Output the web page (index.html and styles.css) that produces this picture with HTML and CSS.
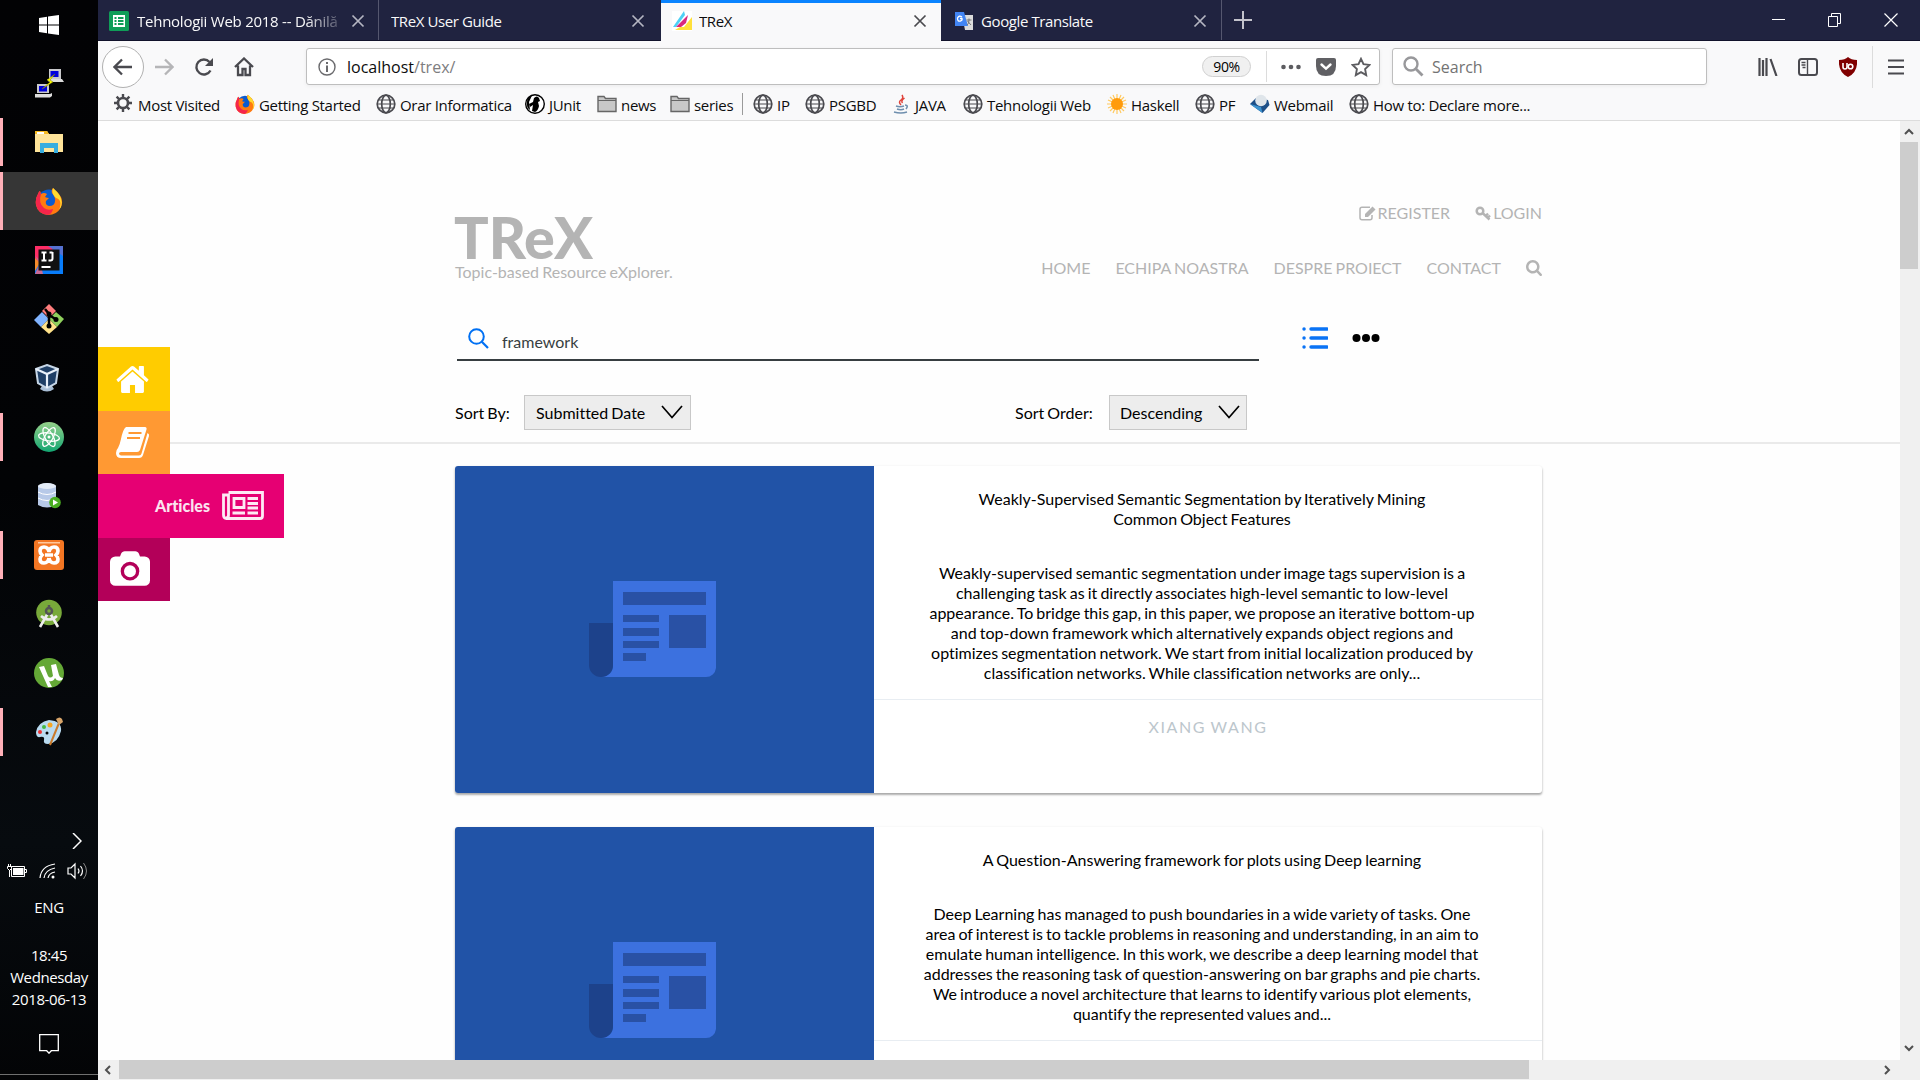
FILE: index.html
```html
<!DOCTYPE html>
<html lang="en">
<head>
<meta charset="utf-8">
<title>TReX</title>
<link rel="stylesheet" href="styles.css">
</head>
<body>
<svg class="defs" aria-hidden="true">
  <symbol id="globe" viewBox="0 0 20 20"><g fill="none" stroke="#4a4a4f" stroke-width="1.7"><circle cx="10" cy="10" r="8.8"/><ellipse cx="10" cy="10" rx="4.3" ry="8.8"/><path d="M2.5 6h15M2.5 14h15M1.2 10h17.6" stroke-width="1.2"/></g></symbol>
  <symbol id="folder" viewBox="0 0 20 20"><path d="M1 2.500h6l1.500 2H19v13H1z" fill="#c8c8c8" stroke="#666" stroke-width="1.4"/><path d="M1 6.500h18" stroke="#666"/></symbol>
  <symbol id="fox" viewBox="0 0 28 28"><circle cx="14" cy="14.500" r="12" fill="#0a5bd0"/><path d="M3 7Q4 4 5 4L6 7Q9 5 12 7L10 10Q12 11 14 11L11 14Q10 18 14 19Q20 19 20 14Q21 10 17 6Q16 3 18 1Q22 5 24 7Q29 13 26 20Q22 28 13 28Q3 27 1 18Q0 12 3 7z" fill="#ff7a10"/><path d="M18 1Q23 5 25 9Q29 17 24 23Q28 13 21 11Q16 7 18 1z" fill="#ffdb30"/><path d="M3 7Q4 4 5 4L6 7Q3 16 9 21Q13 24 18 22Q17 27 13 28Q3 27 1 18Q0 12 3 7z" fill="#f5254b"/></symbol>
  <symbol id="close" viewBox="0 0 14 14"><path d="M1.500 1.500l11 11M12.500 1.500l-11 11" stroke="currentColor" stroke-width="1.7"/></symbol>
  <symbol id="paper" viewBox="0 0 128 97"><path d="M24 0h103v87a10 10 0 0 1-10 9H12q12-1 12-12z" fill="#3c71df"/><path d="M34 11h83v13H34zM34 34h36v7H34zM34 47h36v8H34zM34 60h36v7H34zM34 72h23v8H34zM80 34h37v33H80z" fill="#2951a5"/><path d="M0 42h24v42a12 12 0 0 1-24 0z" fill="#1d428b"/></symbol>
  <symbol id="glass" viewBox="64 128 1664 1664"><path fill="currentColor" d="M1216 832q0-185-131.500-316.500t-316.500-131.500-316.500 131.500-131.500 316.500 131.500 316.500 316.500 131.500 316.500-131.500 131.500-316.500zm512 832q0 52-38 90t-90 38q-54 0-90-38l-343-342q-179 124-399 124-143 0-273.500-55.500t-225-150-150-225-55.500-273.500 55.500-273.500 150-225 225-150 273.500-55.500 273.500 55.500 225 150 150 225 55.500 273.500q0 220-124 399l343 343q37 37 37 90z"/></symbol>
  <symbol id="down" viewBox="0 0 22 14"><path d="M1 1l10 11.500L21 1" fill="none" stroke="#000" stroke-width="1.700"/></symbol>
</svg>

<div class="desktop">
  <aside class="taskbar">
    <div class="task start"><svg width="20" height="20" viewBox="0 0 20 20"><path d="M0 3l8-1.200v7.700H0zM9 1.600L20 0v9.500H9zM0 10.500h8v7.700L0 17zM9 10.500h11V20L9 18.400z" fill="#fff"/></svg></div>
    <div class="task"><svg width="30" height="30" viewBox="0 0 30 30"><path d="M15 1h12v10H15zM3 16h12v9H3z" fill="#c9c9cc"/><path d="M16.500 3h8v6h-8zM5 18h8v5.500H5z" fill="#00d"/><path d="M13 11h15l2 3H15zM1 26h15l2-1v3l-2 1.500H1z" fill="#ddd"/><path d="M21 6l-8 6 3 2-8 7 11-7-3-2z" fill="#ff0" stroke="#770" stroke-width=".5"/></svg></div>
    <div class="task open"><svg width="28" height="24" viewBox="0 0 28 24"><path d="M0 1h12l2 3h14v18H0z" fill="#ffe49a"/><path d="M0 1h12l2 3H0z" fill="#f5b921"/><path d="M2 2h7v2H2z" fill="#fff"/><path d="M5 13h18v10h-4v-5H9v5H5z" fill="#37ade0"/></svg></div>
    <div class="task open active"><svg width="28" height="28"><use href="#fox"/></svg></div>
    <div class="task"><svg width="28" height="28" viewBox="0 0 28 28"><path d="M0 0h28v28H0z" fill="#087cfa"/><path d="M0 0h22L0 20z" fill="#fe2d66"/><path d="M0 10l6 5-6 13h8l-2-8z" fill="#c86a95"/><path d="M0 12l5 5-5 8z" fill="#f58b2c"/><path d="M13 0h15v10z" fill="#5671d0"/><path d="M3.500 3.500h21v21h-21z" fill="#111"/><path d="M6.500 6.500h5M9 6.500v8M6.500 14.500h5M17.500 6v6.500q0 2-2 2h-2M14.500 6.500h3M6.500 21h9" fill="none" stroke="#fff" stroke-width="2"/></svg></div>
    <div class="task"><svg width="30" height="30" viewBox="0 0 30 30"><path d="M15 0l7 7-7 7-7-7z" fill="#ff7d7d"/><path d="M8 8l7 7-8 8-7-7z" fill="#80b3ff"/><path d="M22 8l8 7-7 8-8-8z" fill="#8fd05d"/><path d="M15 15l8 8-8 7-8-7z" fill="#ffe28a"/><path d="M11 5l4 5v13M15 11l8 5" fill="none" stroke="#000" stroke-width="2.500"/><circle cx="15" cy="10" r="2.500"/><circle cx="15" cy="22" r="2.500"/><circle cx="22" cy="15.500" r="2.500"/></svg></div>
    <div class="task vbox"><svg width="26" height="28" viewBox="0 0 26 28"><path d="M8 22h10l2 3q-7 5-14 0z" fill="#a8bed6"/><path d="M13 1l11 4-2 14-9 5-9-5L2 5z" fill="#1f3f66" stroke="#c5d5e6" stroke-width="2"/><path d="M2 5l11 5 11-5M13 10v14" fill="none" stroke="#e8f0fa" stroke-width="2.200"/></svg></div>
    <div class="task open"><svg width="30" height="30" viewBox="0 0 30 30"><defs><linearGradient id="atom" x2="0" y2="1"><stop stop-color="#96d18a"/><stop offset="1" stop-color="#12a672"/></linearGradient></defs><circle cx="15" cy="15" r="15" fill="url(#atom)"/><g fill="none" stroke="#fff" stroke-width="1.300"><ellipse cx="15" cy="15" rx="10.500" ry="4" transform="rotate(8 15 15)"/><ellipse cx="15" cy="15" rx="10.500" ry="4" transform="rotate(62 15 15)"/><ellipse cx="15" cy="15" rx="10.500" ry="4" transform="rotate(120 15 15)"/></g><circle cx="15" cy="15" r="1.500" fill="#fff"/></svg></div>
    <div class="task"><svg width="24" height="27" viewBox="0 0 24 27"><path d="M1 4q9-6 18 0v19q-9 5-18 0z" fill="#b7c9e8"/><ellipse cx="10" cy="4" rx="9" ry="3" fill="#e4ecf8"/><path d="M1 10q9 5 18 0M1 16q9 5 18 0" fill="none" stroke="#fff"/><circle cx="18" cy="20.500" r="5.800" fill="#4aae22"/><path d="M16 17.500l5 3-5 3z" fill="#fff"/></svg></div>
    <div class="task open"><svg width="30" height="30" viewBox="0 0 30 30"><rect width="30" height="30" rx="3" fill="#f37623"/><path d="M4 2h22v1.500H4z" fill="#ffc79c"/><path d="M15 12q-1-5-5-5-4 0-4 4 0 2 2 4-2 2-2 4 0 4 4 4 4 0 5-5M15 12q1-5 5-5 4 0 4 4 0 2-2 4 2 2 2 4 0 4-4 4-4 0-5-5M11 15h8" fill="none" stroke="#fff" stroke-width="3.600"/></svg></div>
    <div class="task"><svg width="26" height="30" viewBox="0 0 26 30"><circle cx="13" cy="13.500" r="12.800" fill="#78a93a"/><path d="M12 14L4 28M14 14l8 14M5 17q8 7 16 0" fill="none" stroke="#eee" stroke-width="2.600"/><circle cx="13" cy="12" r="3" fill="none" stroke="#555" stroke-width="2.500"/><path d="M13 6v4" stroke="#555" stroke-width="2.500"/></svg></div>
    <div class="task"><svg width="30" height="30" viewBox="0 0 30 30"><circle cx="15" cy="15" r="15" fill="#64a836"/><path d="M5 9l5-1 4 10q2 3 5 0l-2-11 5-1 3 11q1 3 4 3l-1 2q-5 2-7-2-2 4-6 3l3 6h-4z" fill="#fff"/></svg></div>
    <div class="task open"><svg width="30" height="30" viewBox="0 0 30 30"><path d="M2 15Q4 5 15 3q13 1 12 11-3 12-13 13-5 0-4-4 1-4-4-3-4 1-4-5z" fill="#b9dbf0"/><circle cx="6" cy="15" r="2" fill="#e33"/><circle cx="10" cy="10" r="2" fill="#4b4"/><circle cx="16" cy="8" r="2.500" fill="#f6a623"/><circle cx="13" cy="16" r="1.500"/><path d="M16 28L25 6" stroke="#c97a2b" stroke-width="2"/><path d="M22 2q4-3 6 0l1 3-4 3z" fill="#d8a56a"/></svg></div>
    <div class="tray-more"><svg width="10" height="16" viewBox="0 0 10 16"><path d="M1 0l8 8-8 8" fill="none" stroke="#fff" stroke-width="1.500"/></svg></div>
    <div class="tray">
      <svg width="20" height="14" viewBox="0 0 20 14"><path d="M4.500 2.500h13v10h-13zM18 5.500h1.500v3H18" fill="none" stroke="#fff"/><path d="M6 4h10.500v7H6z" fill="#fff"/><path d="M1.500 0v2M3.500 0v2M.5 2.500h4v2l-2 2-2-2zM2.500 6v7" stroke="#fff" fill="#000"/></svg>
      <svg width="17" height="16" viewBox="0 0 17 16"><g fill="none" stroke="#fff" stroke-width="1.200"><path d="M1 15Q2 3 16 1M5 15Q6 7 16 5M9 15Q10 10 16 9"/></g><circle cx="14" cy="14" r="1.500" fill="#fff"/></svg>
      <svg width="21" height="18" viewBox="0 0 21 18"><path d="M1 6h3l4-4v14l-4-4H1zM11 6.500q2 2.500 0 5M13.500 4q4 5 0 10" fill="none" stroke="#fff" stroke-width="1.200"/><path d="M16.500 1q6 8 0 16" fill="none" stroke="#888"/></svg>
    </div>
    <div class="lang">ENG</div>
    <div class="clock"><span>18:45</span><span>Wednesday</span><span>2018-06-13</span></div>
    <div class="action"><svg width="20" height="20" viewBox="0 0 20 20"><path d="M.7.7h18.600v16h-7l-2.300 2.500-2.300-2.500h-7z" fill="none" stroke="#fff" stroke-width="1.300"/></svg></div>
    <div class="show-desktop"></div>
  </aside>

  <main class="browser">
    <header class="tabs">
      <div class="tab first"><svg width="20" height="20" viewBox="0 0 20 20"><rect width="20" height="20" rx="1.500" fill="#0f9d58"/><path d="M4 4h12v12H4z" fill="#fff"/><path d="M5.500 6h2v2h-2zM9 6h5.500v2H9zM5.500 9h2v2h-2zM9 9h5.500v2H9zM5.500 12h2v2h-2zM9 12h5.500v2H9z" fill="#0f9d58"/></svg><span class="tab-title faded">Tehnologii Web 2018 -- Dănilă</span><svg class="x" width="14" height="14"><use href="#close"/></svg></div>
      <div class="tab plain"><span class="tab-title">TReX User Guide</span><svg class="x" width="14" height="14"><use href="#close"/></svg></div>
      <div class="tab current"><svg width="20" height="20" viewBox="0 0 20 20"><path d="M0 0h20v20H0z" fill="#fff"/><path d="M12 0l1 4L4 16H1z" fill="#4dd0f5"/><path d="M16 4l-2 8-5 4H4z" fill="#d9277e"/><path d="M20 6v13H3l5-3h4z" fill="#ffe03a"/></svg><span class="tab-title">TReX</span><svg class="x" width="14" height="14"><use href="#close"/></svg></div>
      <div class="tab last"><svg width="20" height="20" viewBox="0 0 20 20"><path d="M8 4h11v15H11z" fill="#dcdcdc"/><path d="M1 1h9l4 14H1z" fill="#4285f4"/><path d="M8 6q-3-2-4.500 1 0 4 3 3 2-.5 1.500-2.500H6" fill="none" stroke="#fff" stroke-width="1.300"/><path d="M12.500 9h5M15 7.500V9q0 4-2 5M13.500 10l3.500 4" stroke="#777" fill="none"/></svg><span class="tab-title">Google Translate</span><svg class="x" width="14" height="14"><use href="#close"/></svg></div>
      <svg class="plus" width="18" height="18" viewBox="0 0 18 18"><path d="M9 0v18M0 9h18" stroke="#c3c3cc" stroke-width="2"/></svg>
      <div class="win">
        <svg width="13" height="16" viewBox="0 0 13 16"><path d="M0 7.500h13" stroke="#fff"/></svg>
        <svg width="13" height="14" viewBox="0 0 13 14"><path d="M.5 3.500h9v10h-9zM3.500 3V.5h9v10H10" fill="none" stroke="#fff"/></svg>
        <svg width="14" height="14" viewBox="0 0 14 14"><path d="M.5.5l13 13M13.500.5l-13 13" stroke="#fff" stroke-width="1.200"/></svg>
      </div>
    </header>

    <nav class="toolbar">
      <span class="back"><svg width="20" height="18" viewBox="0 0 20 18"><path d="M19 9H2M9 1.500L1.500 9 9 16.500" fill="none" stroke="#4a4a4f" stroke-width="2.300"/></svg></span>
      <svg class="fwd" width="20" height="18" viewBox="0 0 20 18"><path d="M1 9h17M11 1.500L18.500 9 11 16.500" fill="none" stroke="#b5b5b7" stroke-width="2.300"/></svg>
      <svg class="reload" width="20" height="20" viewBox="0 0 20 20"><path d="M16.500 13.500A7.500 7.500 0 1 1 15.500 5" fill="none" stroke="#4a4a4f" stroke-width="2.400"/><path d="M19 1v8h-8z" fill="#4a4a4f"/></svg>
      <svg class="home" width="20" height="20" viewBox="0 0 20 20"><path d="M1 10l9-8.500L19 10M4 8.500V18h4.500v-6h3v6H16V8.500" fill="none" stroke="#4a4a4f" stroke-width="2.300"/></svg>
      <div class="urlbar">
        <svg width="18" height="18" viewBox="0 0 18 18"><circle cx="9" cy="9" r="8" fill="none" stroke="#6a6a6d" stroke-width="1.400"/><path d="M9 4v2M9 7.500V14" stroke="#6a6a6d" stroke-width="2"/></svg>
        <span class="url">localhost<i>/trex/</i></span>
        <span class="zoom">90%</span>
        <span class="sep"></span>
        <svg class="dots" width="20" height="6" viewBox="0 0 20 6"><g fill="#5c5c60"><circle cx="2.500" cy="3" r="2.300"/><circle cx="10" cy="3" r="2.300"/><circle cx="17.500" cy="3" r="2.300"/></g></svg>
        <svg class="pocket" width="20" height="18" viewBox="0 0 20 18"><path d="M2 0h16q2 0 2 2v6q0 10-10 10T0 8V2q0-2 2-2z" fill="#606064"/><path d="M5.500 6.500l4.500 4.200 4.500-4.200" fill="none" stroke="#fff" stroke-width="2.400" stroke-linecap="round"/></svg>
        <svg class="star" width="20" height="20" viewBox="0 0 20 20"><path d="M10 1.800l2.500 5.400 5.900.7-4.300 4.200 1.100 6L10 15.200l-5.200 2.900 1.100-6L1.600 7.900l5.900-.7z" fill="none" stroke="#5c5c60" stroke-width="1.900"/></svg>
      </div>
      <div class="searchbar"><svg width="21" height="21" viewBox="0 0 21 21"><circle cx="8" cy="8" r="6.500" fill="none" stroke="#98989b" stroke-width="2.400"/><path d="M12.500 12.500l7 7" stroke="#98989b" stroke-width="2.800"/></svg><span>Search</span></div>
      <svg class="library" width="20" height="18" viewBox="0 0 20 18"><path d="M1.500 0v18M5 2v16M8.500 0v18M12.500 1l6 17" stroke="#4a4a4f" stroke-width="2.200"/></svg>
      <svg class="sidebar-icon" width="20" height="18" viewBox="0 0 20 18"><rect x="1" y="1" width="18" height="16" rx="2.500" fill="none" stroke="#4a4a4f" stroke-width="2"/><path d="M9.500 1v16M3.500 4.500h4M3.500 7h4M4.500 9.500h3" stroke="#4a4a4f" stroke-width="1.400"/></svg>
      <svg class="ublock" width="18" height="20" viewBox="0 0 18 20"><path d="M9 0q3 3 9 3 1 12-9 17Q-1 15 0 3q6 0 9-3z" fill="#800000"/><path d="M4 6v4q0 2 2 2t2-2V6" fill="none" stroke="#fff" stroke-width="1.600"/><circle cx="11.500" cy="9.500" r="2.300" fill="none" stroke="#fff" stroke-width="1.600"/></svg>
      <span class="sep tall"></span>
      <svg class="menu" width="16" height="16" viewBox="0 0 16 16"><path d="M0 1.500h16M0 8h16M0 14.500h16" stroke="#4a4a4f" stroke-width="2.200"/></svg>
    </nav>

    <div class="bookmarks">
      <span><svg viewBox="0 0 20 20"><circle cx="9" cy="9" r="5" fill="none" stroke="#4a4a4f" stroke-width="2.600"/><path d="M9 0v4M9 14v4M0 9h4M14 9h4M2.600 2.600l3 3M12.400 12.400l3 3M2.600 15.400l3-3M12.400 5.600l3-3" stroke="#4a4a4f" stroke-width="2.400"/></svg>Most Visited</span>
      <span><svg><use href="#fox"/></svg>Getting Started</span>
      <span><svg><use href="#globe"/></svg>Orar Informatica</span>
      <span><svg viewBox="0 0 20 20"><circle cx="10" cy="10" r="9.300" fill="#fff" stroke="#000" stroke-width="1.400"/><path d="M9 4q3-3 5 0l1 3-2 1 1 4q-1 5-4 6l-3-1 1-6-3 2-1-3 4-2z"/><path d="M2 8q0-5 5-6.500L4 8l1 8q-4-3-3-8z"/></svg>JUnit</span>
      <span><svg><use href="#folder"/></svg>news</span>
      <span><svg><use href="#folder"/></svg>series</span>
      <b class="divider"></b>
      <span><svg><use href="#globe"/></svg>IP</span>
      <span><svg><use href="#globe"/></svg>PSGBD</span>
      <span><svg viewBox="0 0 20 20"><path d="M11 1q2 3-1 5t0 5M13.500 4q-4 3-2 5" fill="none" stroke="#e0433a" stroke-width="1.500"/><path d="M5 12q4 1.500 8 0M6 15q4 1.500 7 0M3 18q7 2 13 0M14 11q4 0 1 4" fill="none" stroke="#6f8fae" stroke-width="1.500"/></svg>JAVA</span>
      <span><svg><use href="#globe"/></svg>Tehnologii Web</span>
      <span><svg viewBox="0 0 20 20"><path d="M10 0v20M0 10h20M3 3l14 14M17 3L3 17M6 1l8 18M14 1L6 19M1 6l18 8M1 14l18-8" stroke="#ffc95e" stroke-width="1.200"/><circle cx="10" cy="10" r="6" fill="#ff9b0b"/></svg>Haskell</span>
      <span><svg><use href="#globe"/></svg>PF</span>
      <span><svg viewBox="0 0 20 20"><path d="M0 10l6-6 12 2 1.500 5-7 8z" fill="#1c4f88"/><path d="M0 10l11 3 1.500 6z" fill="#3c93d0"/><circle cx="11" cy="6.500" r="5.800" fill="#dfe5ea"/></svg>Webmail</span>
      <span><svg><use href="#globe"/></svg>How to: Declare more...</span>
    </div>

    <div class="viewport">
      <section class="page">
        <div class="container">
          <div class="head">
            <div class="brand"><h1>TReX</h1><p>Topic-based Resource eXplorer.</p></div>
            <div class="menus">
              <div class="account">
                <a><svg width="17" height="15" viewBox="0 0 17 15"><path d="M11 1.200H3Q1 1.200 1 3.200v8.600q0 2 2 2h8q2 0 2-2V9" fill="none" stroke="currentColor" stroke-width="1.500"/><path d="M6 8l7.500-7.500 3 3L9 11H6z" fill="currentColor"/></svg> REGISTER</a>
                <a><svg width="16" height="15" viewBox="0 0 16 15"><circle cx="5" cy="5" r="3.300" fill="none" stroke="currentColor" stroke-width="2.500"/><path d="M7.500 7l7 6.500M10.500 10.500l2.500-3M12.500 12l2.500-2.500" stroke="currentColor" stroke-width="2.400"/></svg>LOGIN</a>
              </div>
              <div class="links"><a>HOME</a><a>ECHIPA NOASTRA</a><a>DESPRE PROIECT</a><a>CONTACT</a><svg width="16" height="16"><use href="#glass"/></svg></div>
            </div>
          </div>
          <div class="find">
            <div class="field"><svg width="21" height="21" viewBox="0 0 21 21"><circle cx="8.500" cy="8.500" r="7.300" fill="none" stroke="#0070f3" stroke-width="2"/><path d="M13.800 13.800l6.200 6.200" stroke="#0070f3" stroke-width="2.200"/></svg><span>framework</span></div>
            <svg class="list" width="26" height="24" viewBox="0 0 26 24"><path d="M9 3h16M9 12h16M9 21h16M2 3h.1M2 12h.1M2 21h.1" stroke="#0a73f5" stroke-width="3.400" stroke-linecap="round"/></svg>
            <svg class="more" width="28" height="8" viewBox="0 0 28 8"><circle cx="4.500" cy="4" r="4"/><circle cx="14" cy="4" r="4"/><circle cx="23.500" cy="4" r="4"/></svg>
          </div>
          <div class="sort">
            <label>Sort By:</label><div class="select by">Submitted Date<svg width="22" height="14"><use href="#down"/></svg></div>
            <label class="order-label">Sort Order:</label><div class="select order">Descending<svg width="22" height="14"><use href="#down"/></svg></div>
          </div>
        </div>
        <hr>
        <div class="results">
          <article class="card">
            <div class="thumb"><svg width="128" height="97"><use href="#paper"/></svg></div>
            <div class="info">
              <h2>Weakly-Supervised Semantic Segmentation by Iteratively Mining<br>Common Object Features</h2>
              <p>Weakly-supervised semantic segmentation under image tags supervision is a<br>challenging task as it directly associates high-level semantic to low-level<br>appearance. To bridge this gap, in this paper, we propose an iterative bottom-up<br>and top-down framework which alternatively expands object regions and<br>optimizes segmentation network. We start from initial localization produced by<br>classification networks. While classification networks are only...</p>
              <div class="author">XIANG WANG</div>
            </div>
          </article>
          <article class="card">
            <div class="thumb"><svg width="128" height="97"><use href="#paper"/></svg></div>
            <div class="info">
              <h2>A Question-Answering framework for plots using Deep learning</h2>
              <p>Deep Learning has managed to push boundaries in a wide variety of tasks. One<br>area of interest is to tackle problems in reasoning and understanding, in an aim to<br>emulate human intelligence. In this work, we describe a deep learning model that<br>addresses the reasoning task of question-answering on bar graphs and pie charts.<br>We introduce a novel architecture that learns to identify various plot elements,<br>quantify the represented values and...</p>
              <div class="author"></div>
            </div>
          </article>
        </div>
        <div class="sidetabs">
          <a class="s-home"><svg width="33" height="27" viewBox="64 253 1664 1283" preserveAspectRatio="none"><path fill="#fff" d="M1472 992v480q0 26-19 45t-45 19h-384v-384h-256v384h-384q-26 0-45-19t-19-45v-480q0-1 .5-3t.5-3l575-474 575 474q1 2 1 6zm223-69l-62 74q-8 9-21 11h-3q-13 0-21-7l-692-577-692 577q-12 8-24 7-13-2-21-11l-62-74q-8-10-7-23.500t11-21.500l719-599q32-26 76-26t76 26l244 204v-195q0-14 9-23t23-9h192q14 0 23 9t9 23v408l219 182q10 8 11 21.500t-7 23.500z"/></svg></a>
          <a class="s-book"><svg width="34" height="32" viewBox="0 0 34 32"><path d="M10 1h19q2 0 1.500 2.500L24 24q-.8 2-3 2H5q-2 0-2 1.500T5 29.500h18q2 0 2.500-2L31.500 7q2 1 1.500 3l-6 19q-1 3-4 3H5q-5 0-5-5 0-3 2-5 2-4 3-9Q7 3 10 1z" fill="#fff"/><path d="M12.500 7h13M11 12h13" stroke="#ff9933" stroke-width="2.200"/></svg></a>
          <a class="s-articles"><span>Articles</span><svg width="42" height="29" viewBox="0 0 42 29"><path d="M6.500 1.500h34V25q0 2.500-2.500 2.500H4.500Q1.500 27.500 1.500 24V4h5v20q0 3-2.500 3" fill="none" stroke="#fdeaf4" stroke-width="2.800"/><path d="M12 7.500h10v9H12zM25.500 7.500H36M25.500 12.500H36M25.500 17H36M10.500 22H23M25.500 22H36" fill="none" stroke="#fdeaf4" stroke-width="2.800"/></svg></a>
          <a class="s-camera"><svg width="40" height="35" viewBox="-64 0 1920 1664"><path fill="#fff" d="M896 672q119 0 203.500 84.500t84.500 203.500-84.500 203.500-203.500 84.500-203.500-84.500-84.500-203.500 84.500-203.500 203.500-84.500zm704-416q106 0 181 75t75 181v896q0 106-75 181t-181 75h-1408q-106 0-181-75t-75-181v-896q0-106 75-181t181-75h224l51-136q19-49 69.500-84.500t103.500-35.500h512q53 0 103.500 35.500t69.500 84.500l51 136h224zm-704 1152q185 0 316.500-131.500t131.500-316.500-131.500-316.500-316.500-131.500-316.500 131.500-131.500 316.500 131.500 316.500 316.500 131.500z"/></svg></a>
        </div>
      </section>
      <div class="vscroll"><svg width="10" height="7" viewBox="0 0 10 7"><path d="M1 6l4-4 4 4" fill="none" stroke="#505050" stroke-width="2"/></svg><i></i><svg class="end" width="10" height="7" viewBox="0 0 10 7"><path d="M1 1l4 4 4-4" fill="none" stroke="#505050" stroke-width="2"/></svg></div>
      <div class="hscroll"><svg width="7" height="10" viewBox="0 0 7 10"><path d="M6 1L2 5l4 4" fill="none" stroke="#505050" stroke-width="2"/></svg><i></i><svg class="end" width="7" height="10" viewBox="0 0 7 10"><path d="M1 1l4 4-4 4" fill="none" stroke="#505050" stroke-width="2"/></svg></div>
    </div>
  </main>
</div>
</body>
</html>
```
FILE: styles.css
```css
* { box-sizing: border-box; }
body { margin: 0; overflow: hidden; font-family: "Open Sans", "Noto Sans", sans-serif; }
svg { display: block; flex: none; }
.defs { position: absolute; width: 0; height: 0; }
.desktop { display: grid; grid-template-columns: 98px 1fr; width: 1920px; height: 1080px; overflow: hidden; }

/* Windows taskbar */
.taskbar { display: flex; flex-direction: column; background: linear-gradient(#020204, #020305 45%, #070b0f 78%, #030406); color: #fff; font-size: 15px; letter-spacing: -0.4px; text-align: center; }
.task { height: 59px; flex: none; display: grid; place-items: center; position: relative; padding-bottom: 2px; }
.start { height: 54px; padding-bottom: 4px; }
.open::before { content: ""; position: absolute; left: 0; top: 5px; width: 3px; height: 48px; background: #ffb0b8; }
.active { background: #363636; height: 58px; margin-bottom: 1px; padding-bottom: 1px; }
.active::before { top: 0; height: 58px; }
.vbox { padding-right: 4px; }
.tray-more { margin: 71px 16px 0 auto; }
.tray { display: flex; justify-content: space-between; align-items: center; padding: 0 10px 0 7px; margin-top: 13px; height: 18px; }
.lang { margin-top: 15px; line-height: 24px; }
.clock { display: flex; flex-direction: column; line-height: 22px; margin-top: 25px; }
.action { display: grid; place-items: center; margin-top: 24px; }
.show-desktop { height: 6px; margin-top: auto; border-top: 1px solid #707070; }

/* Tab strip */
.browser { display: grid; grid-template-rows: 41px 51px 29px 1fr; min-width: 0; background: #f9f9fa; }
.tabs { display: flex; background: #202340; color: #f9f9fa; border-bottom: 1px solid #11122b; font-size: 15px; letter-spacing: -0.4px; }
.tab { display: flex; align-items: center; width: 281px; padding: 2px 14px 0 13px; white-space: nowrap; }
.tab-title { margin-left: 8px; flex: 1; overflow: hidden; line-height: 24px; }
.x { color: #b5b6c2; }
.first { padding: 2px 13px 0 11px; border-right: 1px solid #55576f; }
.first .tab-title { letter-spacing: -0.25px; }
.first .x { margin-left: 9px; }
.faded { mask-image: linear-gradient(to right, #000 82%, transparent 103%); }
.plain { width: 282px; padding-left: 4px; padding-right: 16px; }
.current { width: 280px; background: #f9f9fa; color: #0c0c0d; border-top: 3px solid #0a84ff; padding: 0 14px 3px 11px; height: 41px; }
.current .tab-title { margin-left: 7px; }
.current .x { color: #4a4a4f; }
.last { border-right: 1px solid #55576f; padding-right: 14px; }
.last .tab-title { margin-left: 7px; }
.plus { margin: 11px 0 0 12px; }
.win { display: flex; align-items: center; gap: 43px; margin: 0 23px 0 auto; }

/* Navigation toolbar */
.toolbar { display: flex; align-items: center; padding: 0 17px 0 4px; }
.back { width: 42px; height: 42px; border: 1px solid #b1b1b1; border-radius: 50%; background: #fff; display: grid; place-items: center; }
.fwd { margin-left: 10px; }
.reload, .home { margin-left: 20px; }
.urlbar { display: flex; align-items: center; width: 1074px; height: 37px; margin-left: 52px; padding: 0 8px 0 11px; background: #fff; border: 1px solid #bebebe; border-radius: 3px; box-shadow: 0 1px 4px rgba(0, 0, 0, .06); }
.url { margin-left: 11px; flex: 1; font-size: 16px; letter-spacing: 0; color: #0c0c0d; }
.url i { font-style: normal; color: #7d7d80; }
.zoom { width: 49px; height: 21px; line-height: 19px; border: 1px solid #d0d0d0; border-radius: 11px; background: #f0f0f0; text-align: center; font-size: 14px; letter-spacing: -0.4px; }
.sep { width: 1px; height: 31px; margin: 0 14px 0 15px; background: #dcdcdc; }
.pocket { margin-left: 15px; }
.star { margin-left: 15px; }
.searchbar { display: flex; align-items: center; width: 315px; height: 37px; margin-left: 12px; padding-left: 10px; background: #fff; border: 1px solid #bebebe; border-radius: 3px; font-size: 16px; color: #737373; box-shadow: 0 1px 4px rgba(0, 0, 0, .06); }
.searchbar span { margin-left: 8px; }
.library { margin-left: 51px; }
.sidebar-icon { margin-left: 20px; }
.ublock { margin-left: 21px; }
.tall { height: 42px; margin: 0 15px; }

/* Bookmarks toolbar */
.bookmarks { display: grid; grid-template-columns: 121px 141px 149px 72px 73px 72px 11px 52px 86px 72px 144px 88px 55px 99px 200px; padding-left: 16px; border-bottom: 1px solid #dcdcdc; font-size: 15px; letter-spacing: -0.300px; white-space: nowrap; color: #0c0c0d; }
.bookmarks span { display: flex; align-items: center; gap: 4px; height: 26px; }
.bookmarks svg { width: 20px; height: 20px; margin-bottom: 2px; }
.divider { width: 1px; height: 22px; background: #9a9a9a; margin-top: 1px; }

/* Scrolling area */
.viewport { display: grid; grid-template-columns: 1802px 20px; grid-template-rows: 939px 20px; background: #f0f0f0; min-height: 0; }
.page { position: relative; overflow: hidden; background: #fefefe; font-family: Lato, "Noto Sans", sans-serif; font-size: 16px; word-spacing: -1px; font-variant-ligatures: none; }
.vscroll { display: flex; flex-direction: column; align-items: center; padding: 7px 2px 8px 0; }
.vscroll i { width: 18px; height: 127px; margin-top: 7px; background: #cdcdcd; }
.hscroll { display: flex; align-items: center; padding: 0 9px 1px 6px; }
.hscroll i { width: 1410px; height: 19px; margin-left: 8px; background: #cdcdcd; }
.vscroll .end { margin-top: auto; }
.hscroll .end { margin-left: auto; }

/* Site header */
.container { width: 1087px; margin-left: 357px; }
.head { display: flex; justify-content: space-between; height: 170px; padding-top: 82px; color: #b4b4b4; }
.brand { padding-top: 9px; }
.brand h1 { margin: 0 0 0 -1px; font-size: 57.500px; line-height: 50px; font-weight: 900; }
.brand p { margin: 0; line-height: 20px; }
.menus { display: flex; flex-direction: column; align-items: flex-end; }
.account, .links { display: flex; align-items: center; gap: 25px; line-height: 20px; }
.account { margin-bottom: 35px; }
.account a { display: flex; align-items: center; gap: 2px; }

/* Search and sorting */
.find { display: flex; height: 70px; margin-left: 2px; }
.field { display: flex; width: 802px; border-bottom: 2px solid #373e41; padding: 37px 0 0 11px; color: #373e41; }
.field span { margin: 4px 0 0 13px; line-height: 20px; }
.list { margin: 35px 0 0 43px; }
.more { margin: 43px 0 0 24px; }
.sort { display: flex; align-items: center; height: 81px; padding: 21px 0 0; }
.select { display: flex; align-items: center; justify-content: space-between; height: 35px; padding: 0 7px 0 11px; background: #ededed; border: 1px solid #c8c8c8; }
.sort label { flex: none; width: 69px; }
.by { width: 167px; }
.sort .order-label { width: 94px; margin-left: 324px; }
.order { width: 138px; padding: 0 6px 0 10px; }
hr { height: 2px; margin: 0; border: 0; background: #eaeaea; }

/* Result cards */
.results { display: flex; flex-direction: column; gap: 34px; width: 1087px; margin: 22px 0 0 357px; }
.card { display: flex; height: 327px; flex: none; border-radius: 3px; background: #fff; box-shadow: 0 1px 3px rgba(0, 0, 0, .14), 0 2px 2px rgba(0, 0, 0, .26); }
.thumb { width: 419px; display: grid; place-items: center; padding-right: 23px; background: #2153a7; border-radius: 3px 0 0 3px; }
.info { flex: 1; text-align: center; line-height: 20px; white-space: nowrap; padding-top: 23px; }
.info h2 { margin: 0 12px 0 0; font-size: 16px; font-weight: 400; }
.info p { margin: 34px 12px 0 0; }
.author { margin-top: 16px; padding-top: 17px; border-top: 1px solid #e8edf2; color: #bcc6cc; letter-spacing: 1.600px; }

/* Slide-out tabs over the page's left edge */
.sidetabs { position: absolute; left: 0; top: 226px; display: flex; flex-direction: column; align-items: flex-start; }
.sidetabs a { display: flex; align-items: center; width: 72px; height: 63px; }
.sidetabs .s-home { height: 64px; padding-left: 18px; background: #fc0; }
.s-book { padding: 0 0 2px 18px; background: #f93; }
.sidetabs .s-articles { width: 186px; height: 64px; justify-content: flex-end; gap: 12px; padding: 0 20px 2px 0; background: #e60073; color: #fbe3ef; font-weight: 900; }
.s-camera { padding: 0 0 2px 12px; background: #b30059; }
```
